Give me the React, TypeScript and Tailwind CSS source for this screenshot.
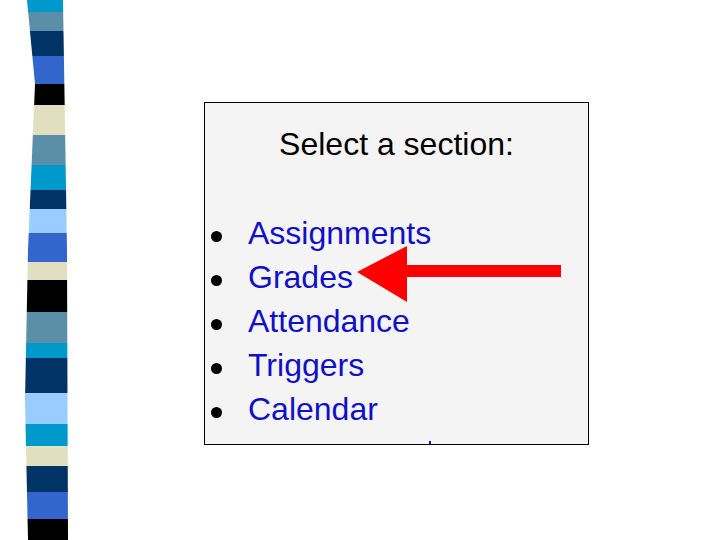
const stripes = [
  'h-[12px] bg-[#0099cc]',
  'h-[19px] bg-[#5b8fa8]',
  'h-[25px] bg-[#003366]',
  'h-[28px] bg-[#3366cc]',
  'h-[21px] bg-black',
  'h-[30px] bg-[#e0e0c0]',
  'h-[30px] bg-[#5b8fa8]',
  'h-[25px] bg-[#0099cc]',
  'h-[19px] bg-[#003366]',
  'h-[24px] bg-[#99ccff]',
  'h-[29px] bg-[#3366cc]',
  'h-[18px] bg-[#e0e0c0]',
  'h-[32px] bg-black',
  'h-[31px] bg-[#5b8fa8]',
  'h-[15px] bg-[#0099cc]',
  'h-[35px] bg-[#003366]',
  'h-[31px] bg-[#99ccff]',
  'h-[22px] bg-[#0099cc]',
  'h-[20px] bg-[#e0e0c0]',
  'h-[26px] bg-[#003366]',
  'h-[27px] bg-[#3366cc]',
  'h-[21px] bg-black',
];

const sections = ['Assignments', 'Grades', 'Attendance', 'Triggers', 'Calendar'];

export default function App() {
  return (
    <div className="flex h-[540px] w-[720px] overflow-hidden bg-white font-['Liberation_Sans',Arial,sans-serif]">
      {/* decorative stripe bar */}
      <div className="ml-[25px] flex w-[43px] flex-col [clip-path:polygon(2px_0,38px_0,42px_250px,43px_100%,3px_100%,0_400px,3px_250px,10px_84px)]">
        {stripes.map((cls, i) => (
          <div key={i} className={cls} />
        ))}
      </div>

      <div className="relative ml-[136px] mt-[102px] h-[343px] w-[385px] border border-black bg-[#f4f4f4]">
        <h2 className="pt-[23px] text-center text-[32px] leading-[36px] font-normal text-black">Select a section:</h2>
        <ul className="mt-[49px]">
          {sections.map((s) => (
            <li key={s} className="flex items-start">
              <span className="ml-[6px] mt-[20px] h-[11px] w-[11px] rounded-full bg-black" />
              <span className="ml-[26px] text-[32px] leading-[44px] text-[#1010c8]">{s}</span>
            </li>
          ))}
        </ul>
        <span className="absolute left-[224px] bottom-0 h-[3px] w-[2px] bg-[#1010c8]" />

        <svg className="absolute left-[152px] top-[142px]" width="206" height="60" viewBox="0 0 206 60">
          <polygon points="0,27 50,1 50,57" fill="#ff0000" />
          <rect x="48" y="20" width="156" height="12" fill="#ff0000" />
        </svg>
      </div>
    </div>
  );
}
